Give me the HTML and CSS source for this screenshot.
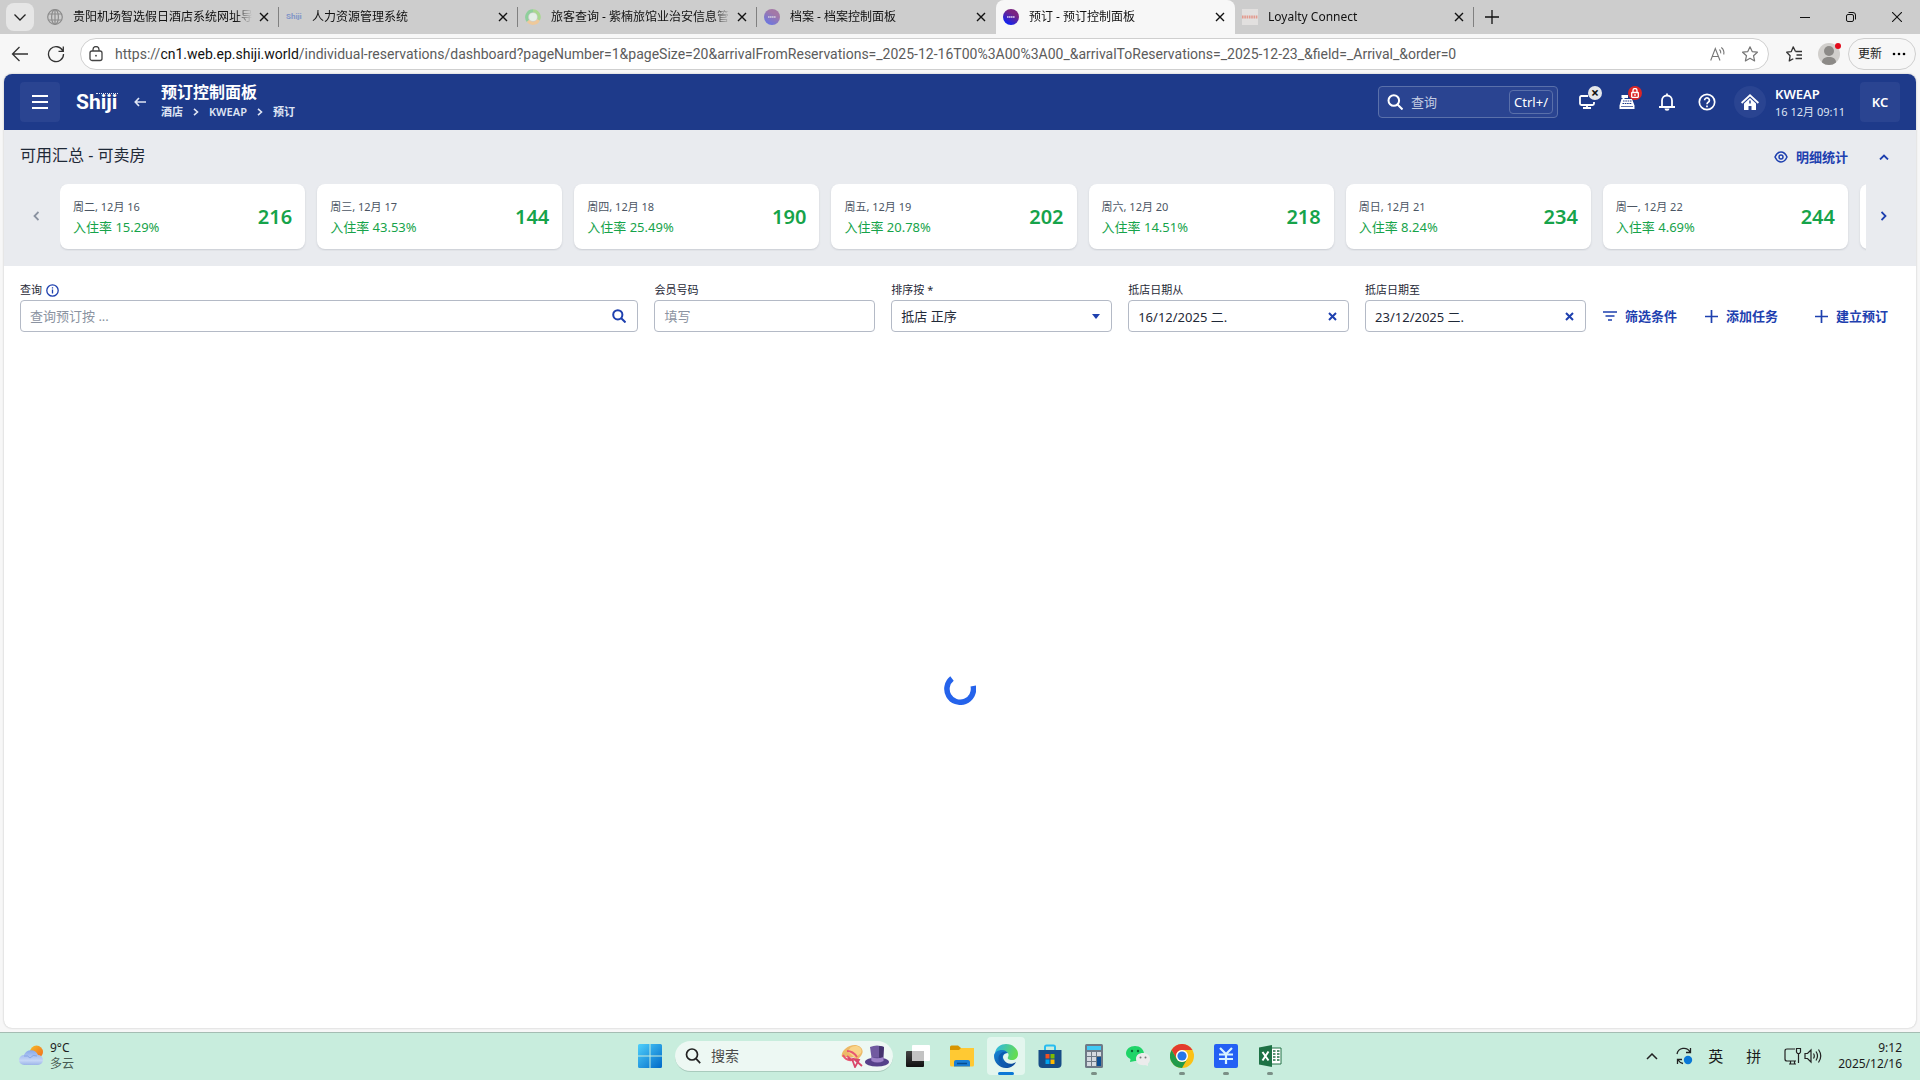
FILE: index.html
```html
<!DOCTYPE html>
<html lang="zh-CN">
<head>
<meta charset="utf-8">
<title>预订 - 预订控制面板</title>
<link rel="stylesheet" href="styles.css">
</head>
<body>
<header class="browser">
  <div class="tabstrip">
    <button class="tab-menu" aria-label="标签页操作"><svg width="14" height="14" viewBox="0 0 14 14"><path d="M1.500 4.500 7 10l5.500-5.500" fill="none" stroke="#222" stroke-width="1.300"/></svg></button>
    <div class="tab">
      <svg class="favicon" viewBox="0 0 16 16" fill="none" stroke="#8c8c8c" stroke-width="1.200"><circle cx="8" cy="8" r="7.300"/><ellipse cx="8" cy="8" rx="3.400" ry="7.300"/><path d="M1.500 5h13M1.500 11h13M8 .7v14.600"/></svg>
      <a class="tab-title" href="#">贵阳机场智选假日酒店系统网址导航</a>
      <button class="tab-close" aria-label="关闭"><svg viewBox="0 0 10 10"><path d="m1 1 8 8M9 1 1 9"/></svg></button>
    </div>
    <div class="tab">
      <span class="favicon favicon-word">Shiji</span>
      <a class="tab-title" href="#">人力资源管理系统</a>
      <button class="tab-close" aria-label="关闭"><svg viewBox="0 0 10 10"><path d="m1 1 8 8M9 1 1 9"/></svg></button>
    </div>
    <div class="tab">
      <svg class="favicon" viewBox="0 0 16 16" fill="none" stroke-width="3"><path d="M3 12A6.300 6.300 0 0 1 8 1.800" stroke="#8fcf9c"/><path d="M8 1.800A6.300 6.300 0 0 1 13.500 11" stroke="#a9d890"/><path d="M13.500 11A6.300 6.300 0 0 1 3 12" stroke="#eec99a"/><circle cx="8" cy="8" r="4" fill="#e4efe6" stroke="none"/></svg>
      <a class="tab-title" href="#">旅客查询 - 紫楠旅馆业治安信息管理系统</a>
      <button class="tab-close" aria-label="关闭"><svg viewBox="0 0 10 10"><path d="m1 1 8 8M9 1 1 9"/></svg></button>
    </div>
    <div class="tab tab-last">
      <svg class="favicon dim" viewBox="0 0 16 16"><circle cx="8" cy="8" r="8" fill="url(#orb)"/><path d="M4 8h8" stroke="#fff" stroke-width="1.400" stroke-dasharray="1.500 .4" opacity=".8"/></svg>
      <a class="tab-title" href="#">档案 - 档案控制面板</a>
      <button class="tab-close" aria-label="关闭"><svg viewBox="0 0 10 10"><path d="m1 1 8 8M9 1 1 9"/></svg></button>
    </div>
    <div class="tab tab-active">
      <svg class="favicon" viewBox="0 0 16 16"><defs><linearGradient id="orb" x1="0" y1="1" x2=".6" y2="0"><stop offset=".15" stop-color="#0b22f5"/><stop offset=".8" stop-color="#7b2582"/></linearGradient></defs><circle cx="8" cy="8" r="8" fill="url(#orb)"/><path d="M4 8h8" stroke="#fff" stroke-width="1.400" stroke-dasharray="1.500 .4" opacity=".8"/></svg>
      <a class="tab-title" href="#">预订 - 预订控制面板</a>
      <button class="tab-close" aria-label="关闭"><svg viewBox="0 0 10 10"><path d="m1 1 8 8M9 1 1 9"/></svg></button>
    </div>
    <div class="tab">
      <svg class="favicon" viewBox="0 0 16 16"><path fill="#e2e0df" d="M0 0h16v16H0z"/><path d="M0 8h16" stroke="#e39a8e" stroke-width="3" stroke-dasharray="1.600 .7"/></svg>
      <a class="tab-title" href="#">Loyalty Connect</a>
      <button class="tab-close" aria-label="关闭"><svg viewBox="0 0 10 10"><path d="m1 1 8 8M9 1 1 9"/></svg></button>
    </div>
    <button class="new-tab" aria-label="新建标签页"><svg width="14" height="14" viewBox="0 0 14 14"><path d="M7 0v14M0 7h14" stroke="#111" stroke-width="1.300"/></svg></button>
    <div class="window-controls">
      <button aria-label="最小化"><svg width="10" height="10" viewBox="0 0 10 10"><path d="M0 5.500h10" stroke="#111"/></svg></button>
      <button aria-label="还原"><svg width="10" height="10" viewBox="0 0 10 10" fill="none" stroke="#111"><rect x=".5" y="2.500" width="7" height="7" rx="1.500"/><path d="M2.500.5H7A2.500 2.500 0 0 1 9.500 3v4.500"/></svg></button>
      <button aria-label="关闭窗口"><svg width="10" height="10" viewBox="0 0 10 10"><path d="m0 0 10 10M10 0 0 10" stroke="#111" stroke-width="1.100"/></svg></button>
    </div>
  </div>
  <div class="toolbar">
    <button class="nav-button" aria-label="后退"><svg width="18" height="16" viewBox="0 0 18 16" fill="none" stroke="#333" stroke-width="1.300"><path d="M8.500 1 1.500 8l7 7M1.500 8H17"/></svg></button>
    <button class="nav-button" aria-label="刷新"><svg width="18" height="18" viewBox="0 0 18 18" fill="none" stroke="#333" stroke-width="1.300"><path d="M15.800 6A7.500 7.500 0 1 0 16.500 9M16.300 1.500V6.300h-4.800"/></svg></button>
    <div class="address">
      <svg width="14" height="16" viewBox="0 0 14 16" fill="none" stroke="#444" stroke-width="1.300"><rect x="1" y="5" width="12" height="9.500" rx="2"/><path d="M4 5V3.500a3 3 0 0 1 6 0V5"/><circle cx="7" cy="9.700" r=".9" fill="#444" stroke="none"/></svg>
      <p class="url">https://<b>cn1.web.ep.shiji.world</b>/individual-reservations/dashboard?pageNumber=1&amp;pageSize=20&amp;arrivalFromReservations=_2025-12-16T00%3A00%3A00_&amp;arrivalToReservations=_2025-12-23_&amp;field=_Arrival_&amp;order=0</p>
      <svg width="16" height="16" viewBox="0 0 16 16" fill="none" stroke="#777" stroke-width="1.100"><path d="M.7 14.500 5.300 2.500l4.700 12M2.300 10.500h6.200M9.500 3.500q1.600 1.600 1.200 3.800M11.300 1.500q3.400 2.800 2.400 7"/></svg>
      <svg width="16" height="16" viewBox="0 0 16 16" fill="none" stroke="#777" stroke-width="1.200" stroke-linejoin="round"><path d="m8 .8 2.200 4.800 5.200.6-3.900 3.500 1.100 5.200L8 12.300l-4.600 2.600 1.100-5.200L.6 6.200l5.200-.6z"/></svg>
    </div>
    <button class="nav-button" aria-label="收藏夹"><svg width="17" height="16" viewBox="0 0 17 16" fill="none" stroke="#333" stroke-width="1.300" stroke-linejoin="round"><path d="M9.500 5.500 7.200.9 5.300 5.600.7 6.200l3.400 3.500-.8 5.200 4-2.200M9.500 5.500H16M10.500 9H16M9.500 12.500H16"/></svg></button>
    <button class="avatar" aria-label="用户"><svg width="24" height="24" viewBox="0 0 24 24"><circle cx="11" cy="12" r="11" fill="#d1cfcc"/><circle cx="11" cy="9" r="5" fill="#8c8a87"/><path d="M4 20.500c0-4 3-5.500 7-5.500s7 1.500 7 5.500a11 11 0 0 1-14 0" fill="#8c8a87"/><circle cx="20" cy="4" r="3" fill="#e30b1c"/></svg></button>
    <button class="update">更新<svg width="14" height="4" viewBox="0 0 14 4"><circle cx="2" cy="2" r="1.300"/><circle cx="7" cy="2" r="1.300"/><circle cx="12" cy="2" r="1.300"/></svg></button>
  </div>
</header>

<main class="app">
  <header class="app-header">
    <button class="square-button" aria-label="菜单"><svg width="16" height="14" viewBox="0 0 16 14"><path d="M0 1h16M0 7h16M0 13h16" stroke="#fff" stroke-width="2"/></svg></button>
    <a class="logo" href="#">Shiji</a>
    <button class="back" aria-label="返回"><svg width="12" height="10" viewBox="0 0 12 10" fill="none" stroke="#dfe5f4" stroke-width="1.700"><path d="M5 1 1.300 5 5 9M1.300 5H12"/></svg></button>
    <div class="heading">
      <h1>预订控制面板</h1>
      <nav class="crumbs">
        <a href="#">酒店</a><svg width="6" height="8" viewBox="0 0 6 8"><path d="m1 .8 3.500 3.200L1 7.200"/></svg><a href="#">KWEAP</a><svg width="6" height="8" viewBox="0 0 6 8"><path d="m1 .8 3.500 3.200L1 7.200"/></svg><a href="#">预订</a>
      </nav>
    </div>
    <label class="quick-search">
      <svg width="16" height="16" viewBox="0 0 16 16" fill="none" stroke="#fff" stroke-width="2"><circle cx="6.800" cy="6.500" r="5.300"/><path d="m10.500 10.500 5 5"/></svg>
      <input type="text" placeholder="查询" aria-label="查询">
      <kbd>Ctrl+/</kbd>
    </label>
    <button class="header-icon" aria-label="工作站"><svg width="16" height="14" viewBox="0 0 16 14" fill="none" stroke="#fff" stroke-width="1.800"><path d="M9 1H2.500Q1 1 1 2.500v6Q1 10 2.500 10h11q1.500 0 1.500-1.500V7M4 13h8M8 10v3"/></svg><span class="badge">×</span></button>
    <button class="header-icon" aria-label="收银"><svg width="16" height="16" viewBox="0 0 16 16"><path d="M2.500 1H9v3H5.500v1H13l2.500 6.500V15H.5v-3.500L2.500 5h1V4h-1z" fill="#fff"/><path d="M4 7h8.500M3.500 9.500h9.500" stroke="#1e3a8a" stroke-width="1.200" stroke-dasharray="1.600 .7"/><path d="M2 12.500h12" stroke="#1e3a8a" stroke-width=".7"/></svg><span class="badge badge-red"><svg width="8" height="10" viewBox="0 0 8 10"><path d="M2 4V2.500a2 2 0 0 1 4 0V4" fill="none" stroke="#fff" stroke-width="1.300"/><rect x=".7" y="4.500" width="6.600" height="4.800" rx=".5" fill="none" stroke="#fff" stroke-width="1.300"/><path d="M4 6v2" stroke="#fff" stroke-width="1.300"/></svg></span></button>
    <button class="header-icon" aria-label="通知"><svg width="16" height="18" viewBox="0 0 16 18" fill="none" stroke="#fff" stroke-width="1.800"><path d="M0 14h16M3 14V7.500a5 5 0 0 1 10 0V14M8 .5v2"/><path d="M5.500 15.500a2.500 2.200 0 0 0 5 0z" fill="#fff" stroke="none"/></svg></button>
    <button class="header-icon" aria-label="帮助"><svg width="18" height="18" viewBox="0 0 18 18" fill="none" stroke="#fff" stroke-width="1.700"><circle cx="9" cy="9" r="7.700"/><path d="M6.600 7.200a2.400 2.400 0 1 1 3.600 2.100Q9 10 9 11.200M9 12.500v1.800"/></svg></button>
    <button class="home" aria-label="主页"><svg width="18" height="16" viewBox="0 0 18 16" fill="#fff"><path d="m9 0 9 8.300-1.200 1.400L9 2.600 1.200 9.700 0 8.300z"/><path d="m9 4 6 5.500V16h-4.500v-4h-3v4H3V9.500z"/><path d="M9 6.500v3" stroke="#2a4491" stroke-width="1.500"/></svg></button>
    <div class="property"><strong>KWEAP</strong><span>16 12月 09:11</span></div>
    <button class="square-button">KC</button>
  </header>

  <section class="summary">
    <div class="summary-head">
      <h2>可用汇总 - 可卖房</h2>
      <button class="text-button"><svg width="14" height="12" viewBox="0 0 14 12" fill="none" stroke="#1e40af" stroke-width="1.500"><path d="M1 6q2.200-5 6-5t6 5q-2.200 5-6 5T1 6z"/><circle cx="7" cy="6" r="2"/></svg>明细统计</button>
      <button class="icon-button" aria-label="收起"><svg width="10" height="6" viewBox="0 0 10 6"><path d="m1 5.500 4-4 4 4"/></svg></button>
    </div>
    <div class="carousel">
      <button class="icon-button muted" aria-label="上一页"><svg width="6" height="10" viewBox="0 0 6 10"><path d="M5.500 1 1.500 5l4 4"/></svg></button>
      <div class="cards">
        <article class="card"><div><p class="date">周二, 12月 16</p><p class="rate">入住率 15.29%</p></div><strong>216</strong></article>
        <article class="card"><div><p class="date">周三, 12月 17</p><p class="rate">入住率 43.53%</p></div><strong>144</strong></article>
        <article class="card"><div><p class="date">周四, 12月 18</p><p class="rate">入住率 25.49%</p></div><strong>190</strong></article>
        <article class="card"><div><p class="date">周五, 12月 19</p><p class="rate">入住率 20.78%</p></div><strong>202</strong></article>
        <article class="card"><div><p class="date">周六, 12月 20</p><p class="rate">入住率 14.51%</p></div><strong>218</strong></article>
        <article class="card"><div><p class="date">周日, 12月 21</p><p class="rate">入住率 8.24%</p></div><strong>234</strong></article>
        <article class="card"><div><p class="date">周一, 12月 22</p><p class="rate">入住率 4.69%</p></div><strong>244</strong></article>
        <article class="card"></article>
      </div>
      <button class="icon-button" aria-label="下一页"><svg width="6" height="10" viewBox="0 0 6 10"><path d="m.5 1 4 4-4 4"/></svg></button>
    </div>
  </section>

  <form class="filters">
    <div class="fields">
      <div class="field">
        <label for="query">查询 <svg width="13" height="13" viewBox="0 0 13 13" fill="none" stroke="#1e40af" stroke-width="1.300"><circle cx="6.500" cy="6.500" r="5.700"/><path d="M6.500 5.500v4M6.500 3.200v1.300"/></svg></label>
        <div class="control"><input id="query" type="text" placeholder="查询预订按 ..."><svg width="14" height="14" viewBox="0 0 14 14" fill="none" stroke="#1e40af" stroke-width="2"><circle cx="5.800" cy="5.800" r="4.600"/><path d="m9 9 4.500 4.500"/></svg></div>
      </div>
      <div class="field">
        <label for="member">会员号码</label>
        <div class="control"><input id="member" type="text" placeholder="填写"></div>
      </div>
      <div class="field">
        <label for="sort">排序按 *</label>
        <div class="control"><select id="sort"><option>抵店 正序</option></select><svg width="8" height="5" viewBox="0 0 8 5"><path d="M0 0h8L4 5z" fill="#1e40af"/></svg></div>
      </div>
      <div class="field">
        <label for="from">抵店日期从</label>
        <div class="control"><input id="from" type="text" value="16/12/2025 二."><svg width="9" height="9" viewBox="0 0 9 9"><path d="m1 1 7 7M8 1 1 8" stroke="#1e40af" stroke-width="2"/></svg></div>
      </div>
      <div class="field">
        <label for="to">抵店日期至</label>
        <div class="control"><input id="to" type="text" value="23/12/2025 二."><svg width="9" height="9" viewBox="0 0 9 9"><path d="m1 1 7 7M8 1 1 8" stroke="#1e40af" stroke-width="2"/></svg></div>
      </div>
    </div>
    <div class="actions">
      <button type="button" class="text-button"><svg width="14" height="10" viewBox="0 0 14 10"><path d="M0 1h14M2.500 5h9M5 9h4" stroke="#1e40af" stroke-width="1.600"/></svg>筛选条件</button>
      <button type="button" class="text-button"><svg width="13" height="13" viewBox="0 0 13 13"><path d="M6.500 0v13M0 6.500h13" stroke="#1e40af" stroke-width="1.700"/></svg>添加任务</button>
      <button type="button" class="text-button"><svg width="13" height="13" viewBox="0 0 13 13"><path d="M6.500 0v13M0 6.500h13" stroke="#1e40af" stroke-width="1.700"/></svg>建立预订</button>
    </div>
  </form>

  <div class="loading" role="status" aria-label="加载中">
    <svg width="32" height="32" viewBox="0 0 32 32"><path d="M29.200 13A13.300 13.300 0 1 1 8 5.500" fill="none" stroke="#2563eb" stroke-width="5.500"/></svg>
  </div>
</main>

<footer class="taskbar">
  <div class="weather">
    <svg width="26" height="22" viewBox="0 0 26 22"><defs><linearGradient id="sun" x1="0" y1="0" x2="1" y2="1"><stop offset="0" stop-color="#f5bb28"/><stop offset="1" stop-color="#f2691b"/></linearGradient><linearGradient id="cloud" x1="0" y1="0" x2="0" y2="1"><stop offset="0" stop-color="#88a9ea"/><stop offset=".7" stop-color="#c5d6f6"/><stop offset="1" stop-color="#9cb5e8"/></linearGradient></defs><circle cx="18.500" cy="7" r="6.500" fill="url(#sun)"/><path d="M6 20a5 5 0 0 1 0-10 7.500 7.500 0 0 1 14 0 5 5 0 0 1 0 10z" fill="url(#cloud)"/><path d="M6 11q4-1 6 2 3-4 7-2" fill="none" stroke="#6e91dc" opacity=".6"/></svg>
    <p>9°C<br><span>多云</span></p>
  </div>
  <div class="dock">
    <button class="app-icon" aria-label="开始"><svg viewBox="0 0 24 24"><defs><linearGradient id="win" x1="0" y1="0" x2="1" y2="1"><stop offset="0" stop-color="#4fd0fb"/><stop offset="1" stop-color="#0069c8"/></linearGradient></defs><path d="M0 1.500Q0 0 1.500 0H11.500v11.500H0zM12.500 0h10Q24 0 24 1.500v10H12.500zM0 12.500h11.500V24h-10Q0 24 0 22.500zM12.500 12.500H24v10q0 1.500-1.500 1.500h-10z" fill="url(#win)"/></svg></button>
    <label class="task-search">
      <svg width="16" height="16" viewBox="0 0 16 16" fill="none" stroke="#222" stroke-width="1.700"><circle cx="7" cy="6.500" r="5.500"/><path d="m11 10.700 4.200 4.500"/></svg>
      <input type="text" placeholder="搜索" aria-label="搜索">
      <svg width="48" height="24" viewBox="0 0 48 24"><path d="M1 13C-1 8 7 0 15 1c5 1 8 5 6 9-1 3-3 3-4 6l-5-3z" fill="#edb967"/><path d="M7 8q2-7 9-6 6 2 4 7l-6 5z" fill="#f9d489"/><path d="M6 7q6 0 10 6M2 11q3 6 9 5l-5-4" fill="none" stroke="#e85771" stroke-width="2"/><path d="m11 15 3 8 4-7-5-1 8 7M10 16l-3-2" fill="none" stroke="#d9476a" stroke-width="1.800"/><path d="M29 3q7-3 14 0l-1 14H31z" fill="#715aa0"/><path d="M38 2q3 0 5 1l-1 14h-4z" fill="#44346e"/><ellipse cx="36" cy="18" rx="12" ry="4.500" fill="#55418a"/><path d="M30 13q6 2.500 12.500 0v4q-6 3-12 0z" fill="#9d83c8"/></svg>
    </label>
    <button class="app-icon" aria-label="任务视图"><svg viewBox="0 0 24 24"><defs><linearGradient id="dark" x1="0" y1="0" x2="0" y2="1"><stop offset="0" stop-color="#444"/><stop offset="1" stop-color="#111"/></linearGradient></defs><rect y="7" width="18" height="16" rx="1" fill="url(#dark)"/><rect x="6" y="1" width="18" height="16" rx="1" fill="#fff"/><path d="M6 7h12v10H6z" fill="#c3c3c3"/></svg></button>
    <button class="app-icon" aria-label="文件资源管理器"><svg viewBox="0 0 24 24"><path d="M0 3q0-1.500 1.500-1.500H8L11 4v4H0z" fill="#d89500"/><path d="M0 6h9l2-2h13v17q0 1.500-1.500 1.500h-21Q0 22.500 0 21z" fill="#ffc933"/><path d="M4 22.500V18q0-2 2-2h12q2 0 2 2v4.500z" fill="#1b7fd4"/><path d="M7 19.500h10" stroke="#064d90" stroke-width="1.500"/></svg></button>
    <button class="app-icon selected" aria-label="Edge"><svg viewBox="0 0 24 24"><defs><linearGradient id="edge1" x1="0" y1="0" x2="1" y2=".3"><stop offset="0" stop-color="#2bb5ef"/><stop offset="1" stop-color="#62dc53"/></linearGradient><linearGradient id="edge2" x1="0" y1="0" x2="1" y2="1"><stop offset="0" stop-color="#1687d8"/><stop offset="1" stop-color="#0b3f91"/></linearGradient></defs><path d="M1 9C2 3 7 0 12 0c7 0 12 5 12 10 0 4-3 6-6 6-3 0-5-1-4-3 2-3-1-6-5-6S2 8 1 9z" fill="url(#edge1)"/><path d="M0 12c0-4 4-6 8-6 3 0 5 1.500 6 3-5 0-6 4-4 7 2 4 8 5 12 2-2 4-6 6-10 6C5 24 0 18 0 12z" fill="url(#edge2)"/><path d="M9 8c-5 2-6 8-2 12 3 3 8 4 11 2-6 1-10-3-10-8 0-3 2-5 5-5-1-1-3-1.300-4-1z" fill="#0c5ab0"/></svg></button>
    <button class="app-icon" aria-label="应用商店"><svg viewBox="0 0 24 24"><path d="M7 7V3q0-1.500 1.500-1.500h7Q17 1.500 17 3v4" fill="none" stroke="#28bdf0" stroke-width="2"/><path d="M.5 6h23v14q0 4-4 4h-15q-4 0-4-4z" fill="#174c86"/><path d="M7.500 10H11.500v4.500H7.500z" fill="#f25022"/><path d="M12.500 10h4v4.500h-4z" fill="#7fba00"/><path d="M7.500 15.500h4V20h-4z" fill="#00a4ef"/><path d="M12.500 15.500h4V20h-4z" fill="#ffb900"/></svg></button>
    <button class="app-icon running" aria-label="计算器"><svg viewBox="0 0 24 24"><rect x="3" width="18" height="24" rx="1.500" fill="#6f7a86"/><path d="M5 2h14v4H5z" fill="#3fc9f5"/><path d="M5 8h4v4H5zM10 8h4v4h-4zM15 8h4v4h-4zM5 13h4v4H5zM10 13h4v4h-4zM5 18h4v4H5zM10 18h4v4h-4z" fill="#d5dae0"/><path d="M15 13h4v9h-4z" fill="#0b4e94"/></svg></button>
    <button class="app-icon" aria-label="微信"><svg viewBox="0 0 24 24"><path d="M9 2c5 0 9 3.500 9 8s-4 7-9 7l-5 1 .5-3C2 14 0 12 0 9.500 0 5 4 2 9 2z" fill="#1fd468"/><circle cx="6" cy="7" r="1.200" fill="#0b6b35"/><circle cx="12" cy="7" r="1.200" fill="#0b6b35"/><path d="M17 9c4 0 7 2.500 7 6 0 2-1 3.500-2 4.500v2.500l-3-1c-5 1-9-2-9-6s3-6 7-6z" fill="#ececec"/><circle cx="14.500" cy="13.500" r="1" fill="#777"/><circle cx="19.500" cy="13.500" r="1" fill="#777"/></svg></button>
    <button class="app-icon running" aria-label="Chrome"><svg viewBox="0 0 24 24"><circle cx="12" cy="12" r="12" fill="#fbc116"/><path d="M1.600 6a12 12 0 0 1 20.800 0H12a6 6 0 0 0-5.200 9z" fill="#e33b2e"/><path d="M1.600 6A12 12 0 0 0 12 24l5.200-9a6 6 0 0 1-10.400 0z" fill="#229a4b"/><circle cx="12" cy="12" r="6" fill="#fff"/><circle cx="12" cy="12" r="4.600" fill="#2876e8"/></svg></button>
    <button class="app-icon running" aria-label="财务"><svg viewBox="0 0 24 24"><rect width="24" height="24" rx="2" fill="#2460f4"/><path d="m6 4 6 6 6-6M5 10.500h14M5 15h14M12 10v10" fill="none" stroke="#d8f3ff" stroke-width="2.200"/></svg></button>
    <button class="app-icon running" aria-label="Excel"><svg viewBox="0 0 24 24"><path d="M12 4h11v16H12z" fill="#fff" stroke="#237346"/><path d="M15 7h2.500M19 7h2.500M15 10h2.500M19 10h2.500M15 13h2.500M19 13h2.500M15 16h2.500M19 16h2.500" stroke="#237346" stroke-width="1.700"/><path d="M1 3.500 14 1v22L1 20.500z" fill="#1e7145"/><path d="m4.500 8 6 8.500m0-9-6 9" stroke="#fff" stroke-width="2"/></svg></button>
  </div>
  <div class="tray">
    <svg width="12" height="7" viewBox="0 0 12 7" fill="none" stroke="#222" stroke-width="1.500"><path d="m1 6 5-5 5 5"/></svg>
    <svg width="18" height="18" viewBox="0 0 18 18" fill="none" stroke="#222" stroke-width="1.300"><path d="M2 7a7 7 0 0 1 13-2M15.500 1v4.500H11M2.500 17v-4.500H7M3 13q2 3 5 3.500"/><circle cx="13" cy="13" r="4.200" fill="#0a78d6" stroke="none"/></svg>
    <span class="ime">英</span>
    <span class="ime">拼</span>
    <span class="system">
      <svg width="18" height="18" viewBox="0 0 18 18" fill="none" stroke="#222" stroke-width="1.200"><path d="M11 2H3Q1 2 1 4v8q0 2 2 2h9M5 17h7M6.500 14v3M10.500 14v3M12.500 1.500h4V5l-1 1.500h-2l-1-1.500zM14.500 7v9"/></svg>
      <svg width="18" height="16" viewBox="0 0 18 16" fill="none" stroke="#222" stroke-width="1.200"><path d="M1 5.500h2.500L7 2v12l-3.500-3.500H1zM9.500 5.500q1.600 2.500 0 5M12 3.500q3 4.500 0 9M14.500 1.500q4.500 6.500 0 13"/></svg>
    </span>
    <p class="clock">9:12<br>2025/12/16</p>
  </div>
</footer>
</body>
</html>
```
FILE: styles.css
```css
* {
  box-sizing: border-box;
}

body {
  margin: 0;
  min-height: 100vh;
  display: flex;
  flex-direction: column;
  background: #f7f7f7;
  color: #1f2937;
  font-family: "Noto Sans", "Noto Sans CJK SC", sans-serif;
  font-size: 13px;
  line-height: 20px;
}

h1, h2, p {
  margin: 0;
}

a {
  color: inherit;
  text-decoration: none;
}

svg {
  display: block;
  flex: none;
}

button, input, select {
  margin: 0;
  padding: 0;
  border: 0;
  outline: 0;
  background: none;
  color: inherit;
  font: inherit;
}

button {
  display: flex;
  align-items: center;
  justify-content: center;
}

/* Browser frame */

.tabstrip {
  display: flex;
  align-items: center;
  height: 34px;
  padding-left: 6px;
  background: #cdcdcd;
  color: #111;
  font-size: 12px;
}

.tab-menu {
  width: 28px;
  height: 28px;
  margin-right: 6px;
  border-radius: 8px;
  background: #e6e6e6;
}

.tab {
  display: flex;
  align-items: center;
  flex: 0 1 239px;
  min-width: 0;
  height: 34px;
  padding: 0 5px 0 7px;
  background: linear-gradient(#808080, #808080) right 7px / 1px 20px no-repeat;
}

.tab-last {
  background: none;
}

.tab-active {
  border-radius: 8px 8px 0 0;
  background: #f7f7f7;
}

.favicon {
  width: 16px;
  height: 16px;
  flex: none;
}

.favicon-word {
  color: #8196c8;
  font: bold 8px/16px Roboto, sans-serif;
}

.dim {
  opacity: 0.5;
}

.tab-title {
  flex: 1;
  margin: 0 2px 0 10px;
  overflow: hidden;
  white-space: nowrap;
  mask-image: linear-gradient(to left, transparent, #000 16px);
}

.tab-close {
  width: 20px;
  height: 20px;
}

.tab-close svg {
  width: 10px;
  height: 10px;
  stroke: #111;
  stroke-width: 1.4;
}

.new-tab {
  width: 36px;
  height: 28px;
}

.window-controls {
  display: flex;
  margin-left: auto;
}

.window-controls button {
  width: 46px;
  height: 34px;
}

.toolbar {
  display: flex;
  align-items: center;
  height: 40px;
  padding: 0 4px 0 2px;
  background: #f7f7f7;
}

.nav-button {
  width: 36px;
  height: 32px;
}

.address {
  display: flex;
  align-items: center;
  gap: 16px;
  flex: 1;
  min-width: 0;
  height: 32px;
  margin: 0 7px 0 6px;
  padding: 0 10px 0 8px;
  border: 1px solid #cfcfcf;
  border-radius: 16px;
  background: #fff;
}

.url {
  flex: 1;
  min-width: 0;
  margin-left: -4px;
  overflow: hidden;
  color: #5c5c5c;
  font-family: Roboto, sans-serif;
  font-size: 14px;
  white-space: nowrap;
}

.url b {
  color: #111;
  font-weight: 400;
}

.avatar {
  width: 36px;
  height: 32px;
}

.update {
  gap: 10px;
  width: 68px;
  height: 32px;
  border: 1px solid #cfcfcf;
  border-radius: 16px;
  color: #222;
  font-size: 12px;
}

/* Application */

.app {
  display: flex;
  flex-direction: column;
  flex: 1;
  margin: 0 4px 4px;
  overflow: hidden;
  border-radius: 8px;
  background: #fff;
  box-shadow: 0 0 2px #b5b5b5;
}

.app-header {
  display: flex;
  align-items: center;
  height: 56px;
  padding: 0 16px;
  background: #1e3a8a;
  color: #fff;
}

.square-button {
  width: 40px;
  height: 40px;
  border-radius: 4px;
  background: #2a4491;
  font-weight: 600;
}

.logo {
  position: relative;
  width: 42px;
  margin: 0 14px 0 16px;
  font: bold 21px/32px Roboto, sans-serif;
}

/* Row of dots over the wordmark */
.logo::after {
  content: "";
  position: absolute;
  top: 7px;
  right: 0;
  width: 22px;
  border-top: 1px dotted #dfe5f4;
}

.back {
  width: 16px;
  height: 24px;
}

.heading {
  margin-left: 13px;
}

.heading h1 {
  font-size: 16px;
  font-weight: 700;
  line-height: 20px;
}

.crumbs {
  display: flex;
  align-items: center;
  gap: 10px;
  color: #dfe5f4;
  font-size: 11px;
  font-weight: 600;
  line-height: 20px;
}

.crumbs svg {
  fill: none;
  stroke: #dfe5f4;
  stroke-width: 1.6;
}

.quick-search {
  display: flex;
  align-items: center;
  width: 180px;
  height: 32px;
  margin-left: auto;
  margin-right: 9px;
  padding: 0 4px 0 8px;
  border: 1px solid #5a70aa;
  border-radius: 4px;
  background: #2a4491;
}

.quick-search input {
  flex: 1;
  min-width: 0;
  margin-left: 8px;
}

.quick-search input::placeholder {
  color: #c3cce2;
  opacity: 1;
}

.quick-search kbd {
  padding: 0 4px;
  border: 1px solid #5a70aa;
  border-radius: 4px;
  font: 13px/22px "Noto Sans", sans-serif;
}

.header-icon {
  position: relative;
  width: 40px;
  height: 40px;
}

.badge {
  position: absolute;
  top: 4px;
  right: 5px;
  display: flex;
  align-items: center;
  justify-content: center;
  width: 14px;
  height: 14px;
  border-radius: 7px;
  background: #e5e7eb;
  color: #111;
  font-size: 14px;
  font-weight: 700;
  line-height: 14px;
}

.badge-red {
  background: #dc2626;
}

.home {
  width: 32px;
  height: 32px;
  margin: 0 9px 0 7px;
  border-radius: 16px;
  background: #2a4491;
}

.property {
  width: 85px;
  padding-top: 2px;
}

.property strong, .property span {
  display: block;
  line-height: 17px;
  white-space: nowrap;
}

.property strong {
  font-weight: 600;
}

.property span {
  color: #dfe5f4;
  font-size: 11px;
}

.summary {
  padding: 16px 16px 15px;
  background: #e9ebef;
}

.summary-head {
  display: flex;
  align-items: center;
  height: 22px;
}

.summary-head h2 {
  flex: 1;
  align-self: flex-start;
  font-size: 16px;
  font-weight: 400;
  line-height: 18px;
}

.text-button {
  gap: 8px;
  color: #1e40af;
  font-weight: 600;
  white-space: nowrap;
}

.icon-button {
  width: 32px;
  height: 32px;
}

.summary-head .icon-button {
  margin-left: 20px;
}

.icon-button svg {
  fill: none;
  stroke: #1e40af;
  stroke-width: 1.8;
}

.icon-button.muted svg {
  stroke: #8b93a1;
}

.carousel {
  display: flex;
  align-items: flex-start;
  margin-top: 16px;
}

.carousel .icon-button {
  height: 64px;
}

.carousel .muted {
  margin-right: 8px;
}

.carousel .icon-button:last-child {
  margin-left: 2px;
}

.cards {
  display: flex;
  gap: 12px;
  flex: 1;
  min-width: 0;
  padding-bottom: 2px;
  overflow: hidden;
}

.card {
  display: flex;
  align-items: center;
  justify-content: space-between;
  flex: 0 0 calc((100% - 90px) / 7);
  height: 65px;
  padding: 0 13px;
  border-radius: 8px;
  background: #fff;
  box-shadow: 0 1px 2px #c9ccd2;
}

.date {
  color: #4b5563;
  font-size: 11px;
}

.rate {
  color: #16a34a;
}

.card strong {
  color: #16a34a;
  font-size: 20px;
  font-weight: 600;
}

.filters {
  display: flex;
  align-items: flex-end;
  padding: 14px 28px 16px 16px;
}

.fields {
  display: grid;
  grid-template-columns: 14fr 5fr 5fr 5fr 5fr;
  gap: 16px;
  flex: 1;
}

.field label {
  display: flex;
  align-items: center;
  gap: 4px;
  height: 20px;
  font-size: 11px;
}

.control {
  display: flex;
  align-items: center;
  height: 32px;
  padding: 0 11px 0 9px;
  border: 1px solid #b4bac6;
  border-radius: 4px;
}

.control input, .control select {
  flex: 1;
  min-width: 0;
  height: 28px;
  appearance: none;
}

.control input::placeholder {
  color: #8b93a1;
  opacity: 1;
}

.actions {
  display: flex;
  gap: 28px;
  height: 32px;
  margin-left: 17px;
}

.actions .text-button:last-child {
  margin-left: 9px;
}

.loading {
  display: flex;
  justify-content: center;
  flex: 1;
  padding-top: 325px;
}

/* Taskbar */

.taskbar {
  display: grid;
  grid-template-columns: 1fr auto 1fr;
  align-items: center;
  height: 48px;
  padding: 0 18px 1px;
  border-top: 1px solid #a5bdb3;
  background: #c8eddd;
  color: #1c1c1c;
  font-size: 12px;
  line-height: 16px;
}

.weather {
  display: flex;
  align-items: center;
  gap: 6px;
}

.weather span {
  color: #4a5c54;
}

.dock {
  display: flex;
  align-items: center;
  gap: 6px;
}

.app-icon {
  position: relative;
  width: 38px;
  height: 38px;
  border-radius: 4px;
}

.app-icon svg {
  width: 24px;
  height: 24px;
}

.selected {
  background: #e3f6ee;
}

.running::after, .selected::after {
  content: "";
  position: absolute;
  bottom: 0;
  left: 16px;
  width: 6px;
  height: 3px;
  border-radius: 2px;
  background: #7b8f86;
}

.selected::after {
  left: 11px;
  width: 16px;
  background: #0a78d6;
}

.task-search {
  display: flex;
  align-items: center;
  width: 218px;
  height: 31px;
  padding: 0 4px 0 10px;
  border-bottom: 1px solid #a9cbbd;
  border-radius: 16px;
  background: #edf8f3;
  font-size: 14px;
}

.task-search input {
  flex: 1;
  min-width: 0;
  margin-left: 10px;
}

.task-search input::placeholder {
  color: #4a4a4a;
  opacity: 1;
}

.tray {
  display: flex;
  align-items: center;
  justify-content: flex-end;
  gap: 23px;
}

.tray svg + svg {
  margin-left: -6px;
}

.ime {
  font-size: 15px;
}

.tray svg + .ime {
  margin-left: -8px;
}

.system {
  display: flex;
  align-items: center;
  gap: 8px;
}

.clock {
  margin-left: -7px;
  text-align: right;
}
```
